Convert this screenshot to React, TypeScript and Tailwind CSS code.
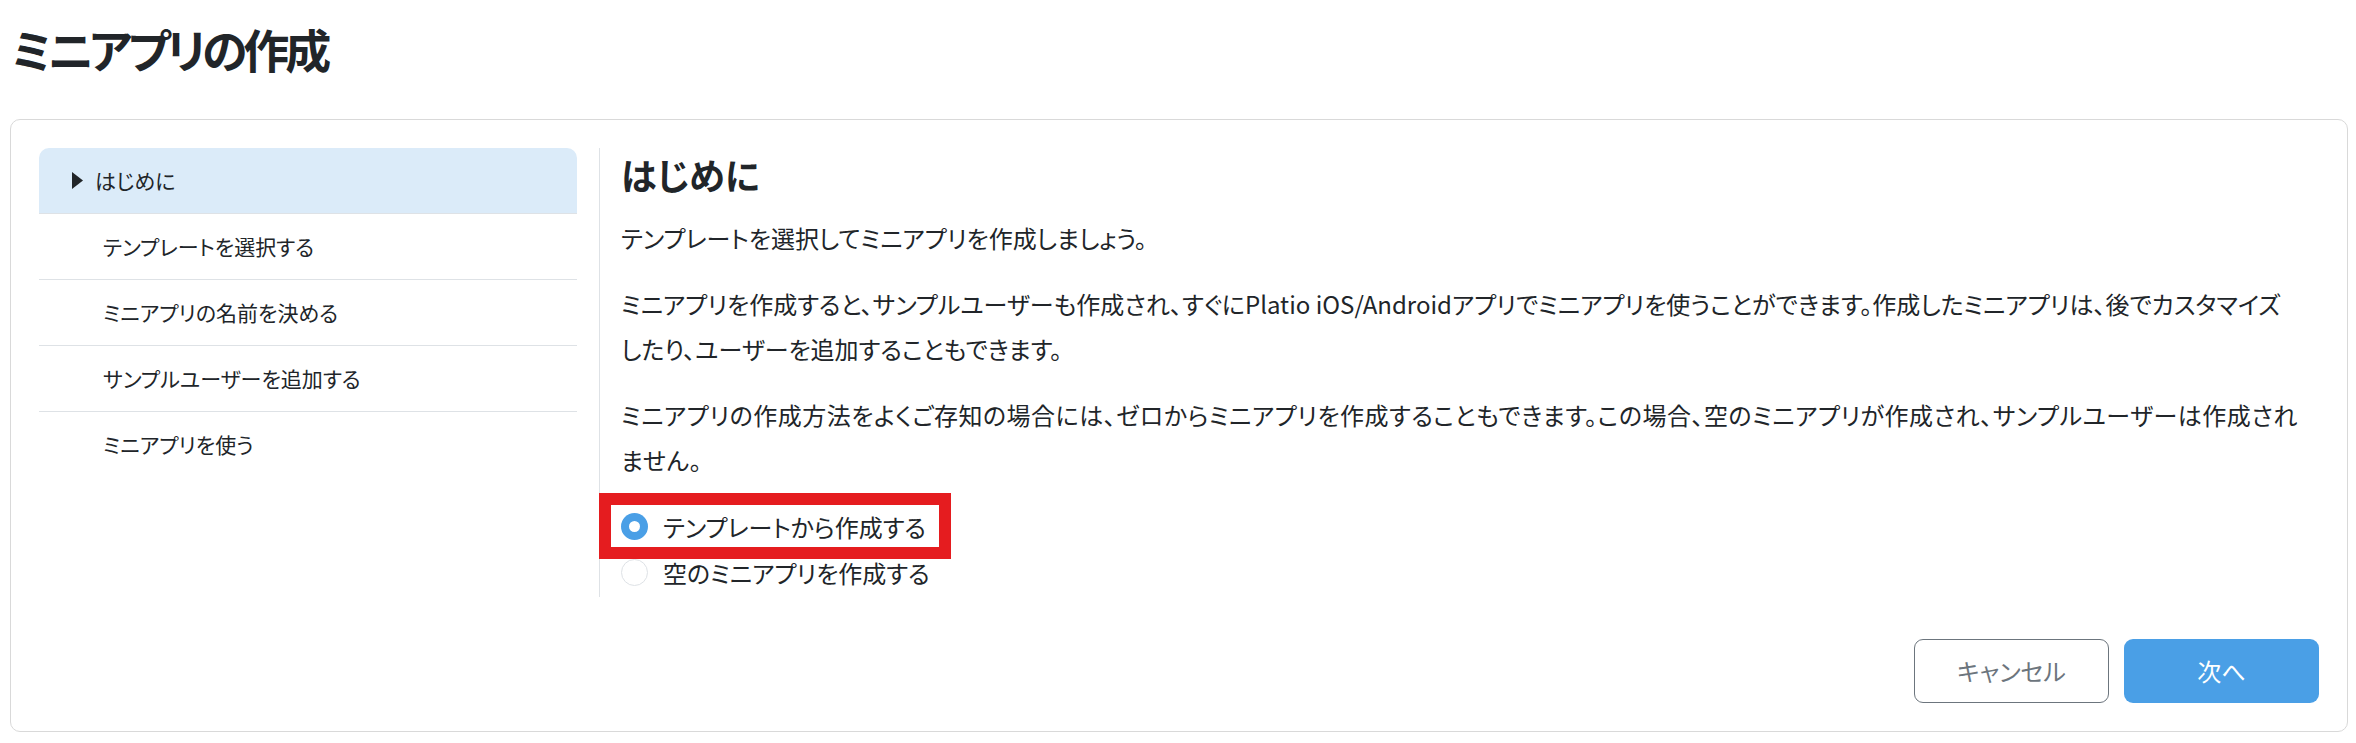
const steps = [
  'はじめに',
  'テンプレートを選択する',
  'ミニアプリの名前を決める',
  'サンプルユーザーを追加する',
  'ミニアプリを使う',
]

function Radio({ checked }: { checked?: boolean }) {
  if (checked) {
    return (
      <span className="flex h-[27px] w-[27px] shrink-0 items-center justify-center rounded-full bg-[#4a9fe6]">
        <span className="h-[11px] w-[11px] rounded-full bg-white" />
      </span>
    )
  }
  return <span className="h-[27px] w-[27px] shrink-0 rounded-full border border-[#dee2e6] bg-white" />
}

export default function App() {
  return (
    <div className="min-h-screen bg-white text-[#212529] font-['Noto_Sans_CJK_JP',sans-serif] [font-feature-settings:'palt']">
      <h1 className="pl-[11px] pt-[19px] text-[46px] font-bold leading-[58px] tracking-[-4px]">ミニアプリの作成</h1>

      <div className="mt-[42px] ml-[10px] mr-[8px] rounded-[10px] border border-[#d9d9d9] p-[28px]">
        <div className="flex">
          {/* Steps */}
          <ul className="w-[538px] shrink-0">
            {steps.map((s, i) =>
              i === 0 ? (
                <li
                  key={s}
                  className="flex h-[66px] items-center gap-[12px] rounded-t-[10px] border-b border-[#dee2e6] bg-[#dbebf9] pl-[33px] text-[21px]"
                >
                  <svg width="11" height="17" viewBox="0 0 11 17" className="shrink-0">
                    <polygon points="0,0 11,8.5 0,17" fill="#212529" />
                  </svg>
                  {s}
                </li>
              ) : (
                <li
                  key={s}
                  className={`flex h-[66px] items-center pl-[64px] text-[21px] ${i < steps.length - 1 ? 'border-b border-[#dee2e6]' : ''}`}
                >
                  {s}
                </li>
              )
            )}
          </ul>

          {/* Content */}
          <div className="ml-[22px] flex-1 border-l border-[#dee2e6] pl-[21px] pb-[2px] text-[24px] leading-[45px]">
            <h2 className="mt-0 mb-[15px] text-[36px] font-semibold leading-[52px]">はじめに</h2>
            <p className="mb-[21px]">テンプレートを選択してミニアプリを作成しましょう。</p>
            <p className="mb-[21px]">
              ミニアプリを作成すると、サンプルユーザーも作成され、すぐにPlatio iOS/Androidアプリでミニアプリを使うことができます。作成したミニアプリは、後でカスタマイズ
              <br />
              したり、ユーザーを追加することもできます。
            </p>
            <p className="mb-[21px] tracking-[0.5px]">
              ミニアプリの作成方法をよくご存知の場合には、ゼロからミニアプリを作成することもできます。この場合、空のミニアプリが作成され、サンプルユーザーは作成され
              <br />
              ません。
            </p>
            <div className="relative flex h-[46px] items-center gap-[15px]">
              <Radio checked />
              <span>テンプレートから作成する</span>
              <div className="pointer-events-none absolute left-[-22px] top-[-10px] h-[66px] w-[352px] border-[12px] border-[#e51c1f]" />
            </div>
            <div className="flex h-[46px] items-center gap-[15px]">
              <Radio />
              <span>空のミニアプリを作成する</span>
            </div>
          </div>
        </div>

        <div className="mt-[42px] flex justify-end gap-[15px]">
          <button className="h-[64px] w-[195px] rounded-[9px] border border-[#6c757d] bg-white text-[24px] text-[#6c757d]">
            キャンセル
          </button>
          <button className="h-[64px] w-[195px] rounded-[9px] bg-[#4a9fe6] text-[24px] text-white">次へ</button>
        </div>
      </div>
    </div>
  )
}
